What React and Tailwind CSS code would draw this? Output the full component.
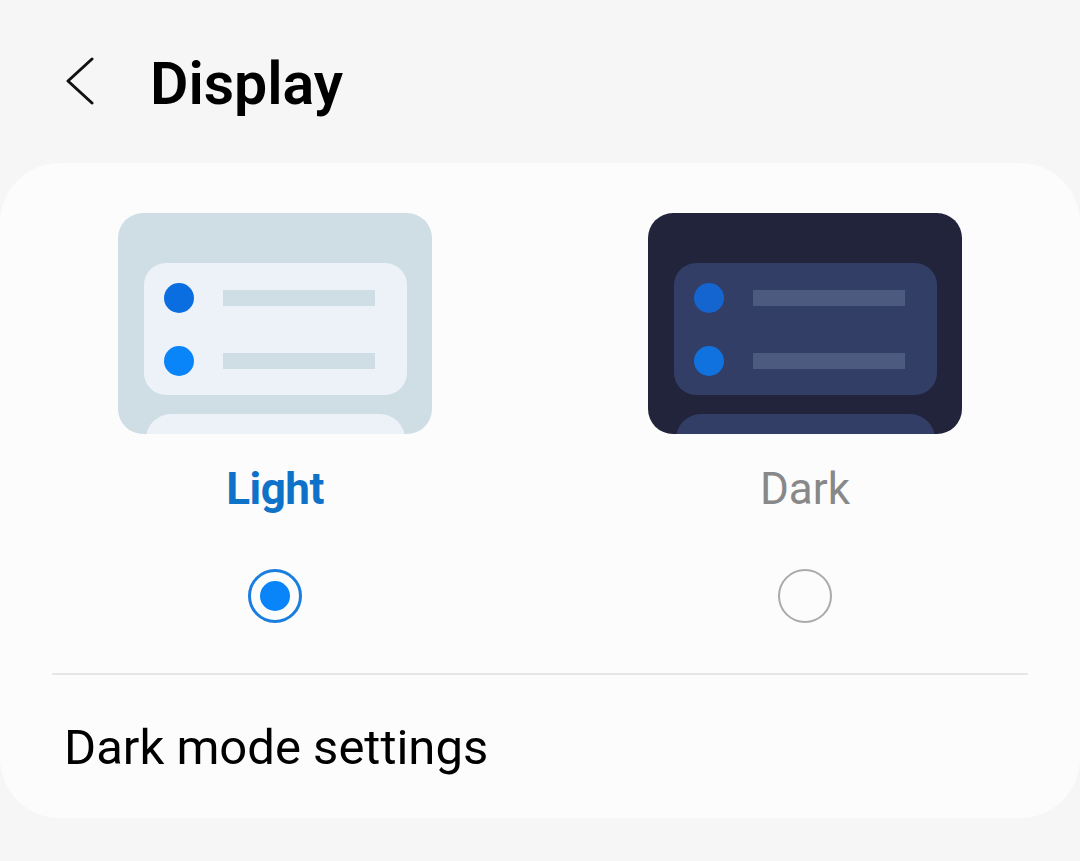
const font = { fontFamily: 'Roboto, "Noto Sans", sans-serif' }

function Preview({ dark }) {
  const bg = dark ? 'bg-[#22243c]' : 'bg-[#cfdde5]'
  const panel = dark ? 'bg-[#323e66]' : 'bg-[#edf2f8]'
  const line = dark ? 'bg-[#4c5a80]' : 'bg-[#cfdde5]'
  const dot1 = dark ? 'bg-[#1565d0]' : 'bg-[#0b6ee0]'
  const dot2 = dark ? 'bg-[#1072de]' : 'bg-[#0a84f9]'
  return (
    <div className={`flex h-[221px] w-[314px] flex-col items-center overflow-hidden rounded-[25px] pt-[50px] ${bg}`}>
      <div className={`flex h-[132px] w-[263px] shrink-0 flex-col justify-center gap-[33px] rounded-[22px] pl-[20px] ${panel}`}>
        <div className="flex items-center gap-[29px]">
          <span className={`h-[30px] w-[30px] rounded-full ${dot1}`} />
          <span className={`h-[16px] w-[152px] ${line}`} />
        </div>
        <div className="flex items-center gap-[29px]">
          <span className={`h-[30px] w-[30px] rounded-full ${dot2}`} />
          <span className={`h-[16px] w-[152px] ${line}`} />
        </div>
      </div>
      <div className={`mt-[19px] h-[40px] w-[259px] shrink-0 rounded-t-[25px] ${panel}`} />
    </div>
  )
}

function Option({ label, dark, selected }) {
  return (
    <div className="flex flex-col items-center">
      <Preview dark={dark} />
      <p
        className={`mt-[28px] text-[44px] leading-[54px] ${selected ? 'font-bold tracking-[-0.5px] text-[#0f72c9]' : 'text-[#888888]'}`}
      >
        {label}
      </p>
      <div className="mt-[53px]">
        {selected ? (
          <div className="flex h-[54px] w-[54px] items-center justify-center rounded-full border-[3px] border-[#1a7ee0]">
            <div className="h-[30px] w-[30px] rounded-full bg-[#0a84f9]" />
          </div>
        ) : (
          <div className="h-[54px] w-[54px] rounded-full border-[2.5px] border-[#aaaaaa]" />
        )}
      </div>
    </div>
  )
}

export default function App() {
  return (
    <div className="h-[861px] w-[1080px] overflow-hidden bg-[#f6f6f6]" style={font}>
      <header className="flex h-[163px] items-start pt-[49px]">
        <button type="button" className="ml-[66px] mt-[8px] flex h-[48px] w-[30px] items-center">
          <svg width="30" height="48" viewBox="0 0 30 48" fill="none">
            <path d="M26 2 L2 24 L26 46" stroke="#111" strokeWidth="3" strokeLinecap="round" strokeLinejoin="round" />
          </svg>
        </button>
        <h1 className="ml-[54px] text-[59px] font-semibold leading-[70px] text-black">Display</h1>
      </header>

      <section className="rounded-[60px] bg-[#fcfcfc] pt-[50px] pb-[41px]">
        <div className="mx-auto grid w-[1060px] grid-cols-2">
          <Option label="Light" selected />
          <Option label="Dark" dark />
        </div>
        <div className="mx-[52px] mt-[50px] h-[2px] bg-[#e6e6e6]" />
        <p className="mt-[44px] pl-[64px] text-[49px] leading-[58px] text-black">Dark mode settings</p>
      </section>
    </div>
  )
}
